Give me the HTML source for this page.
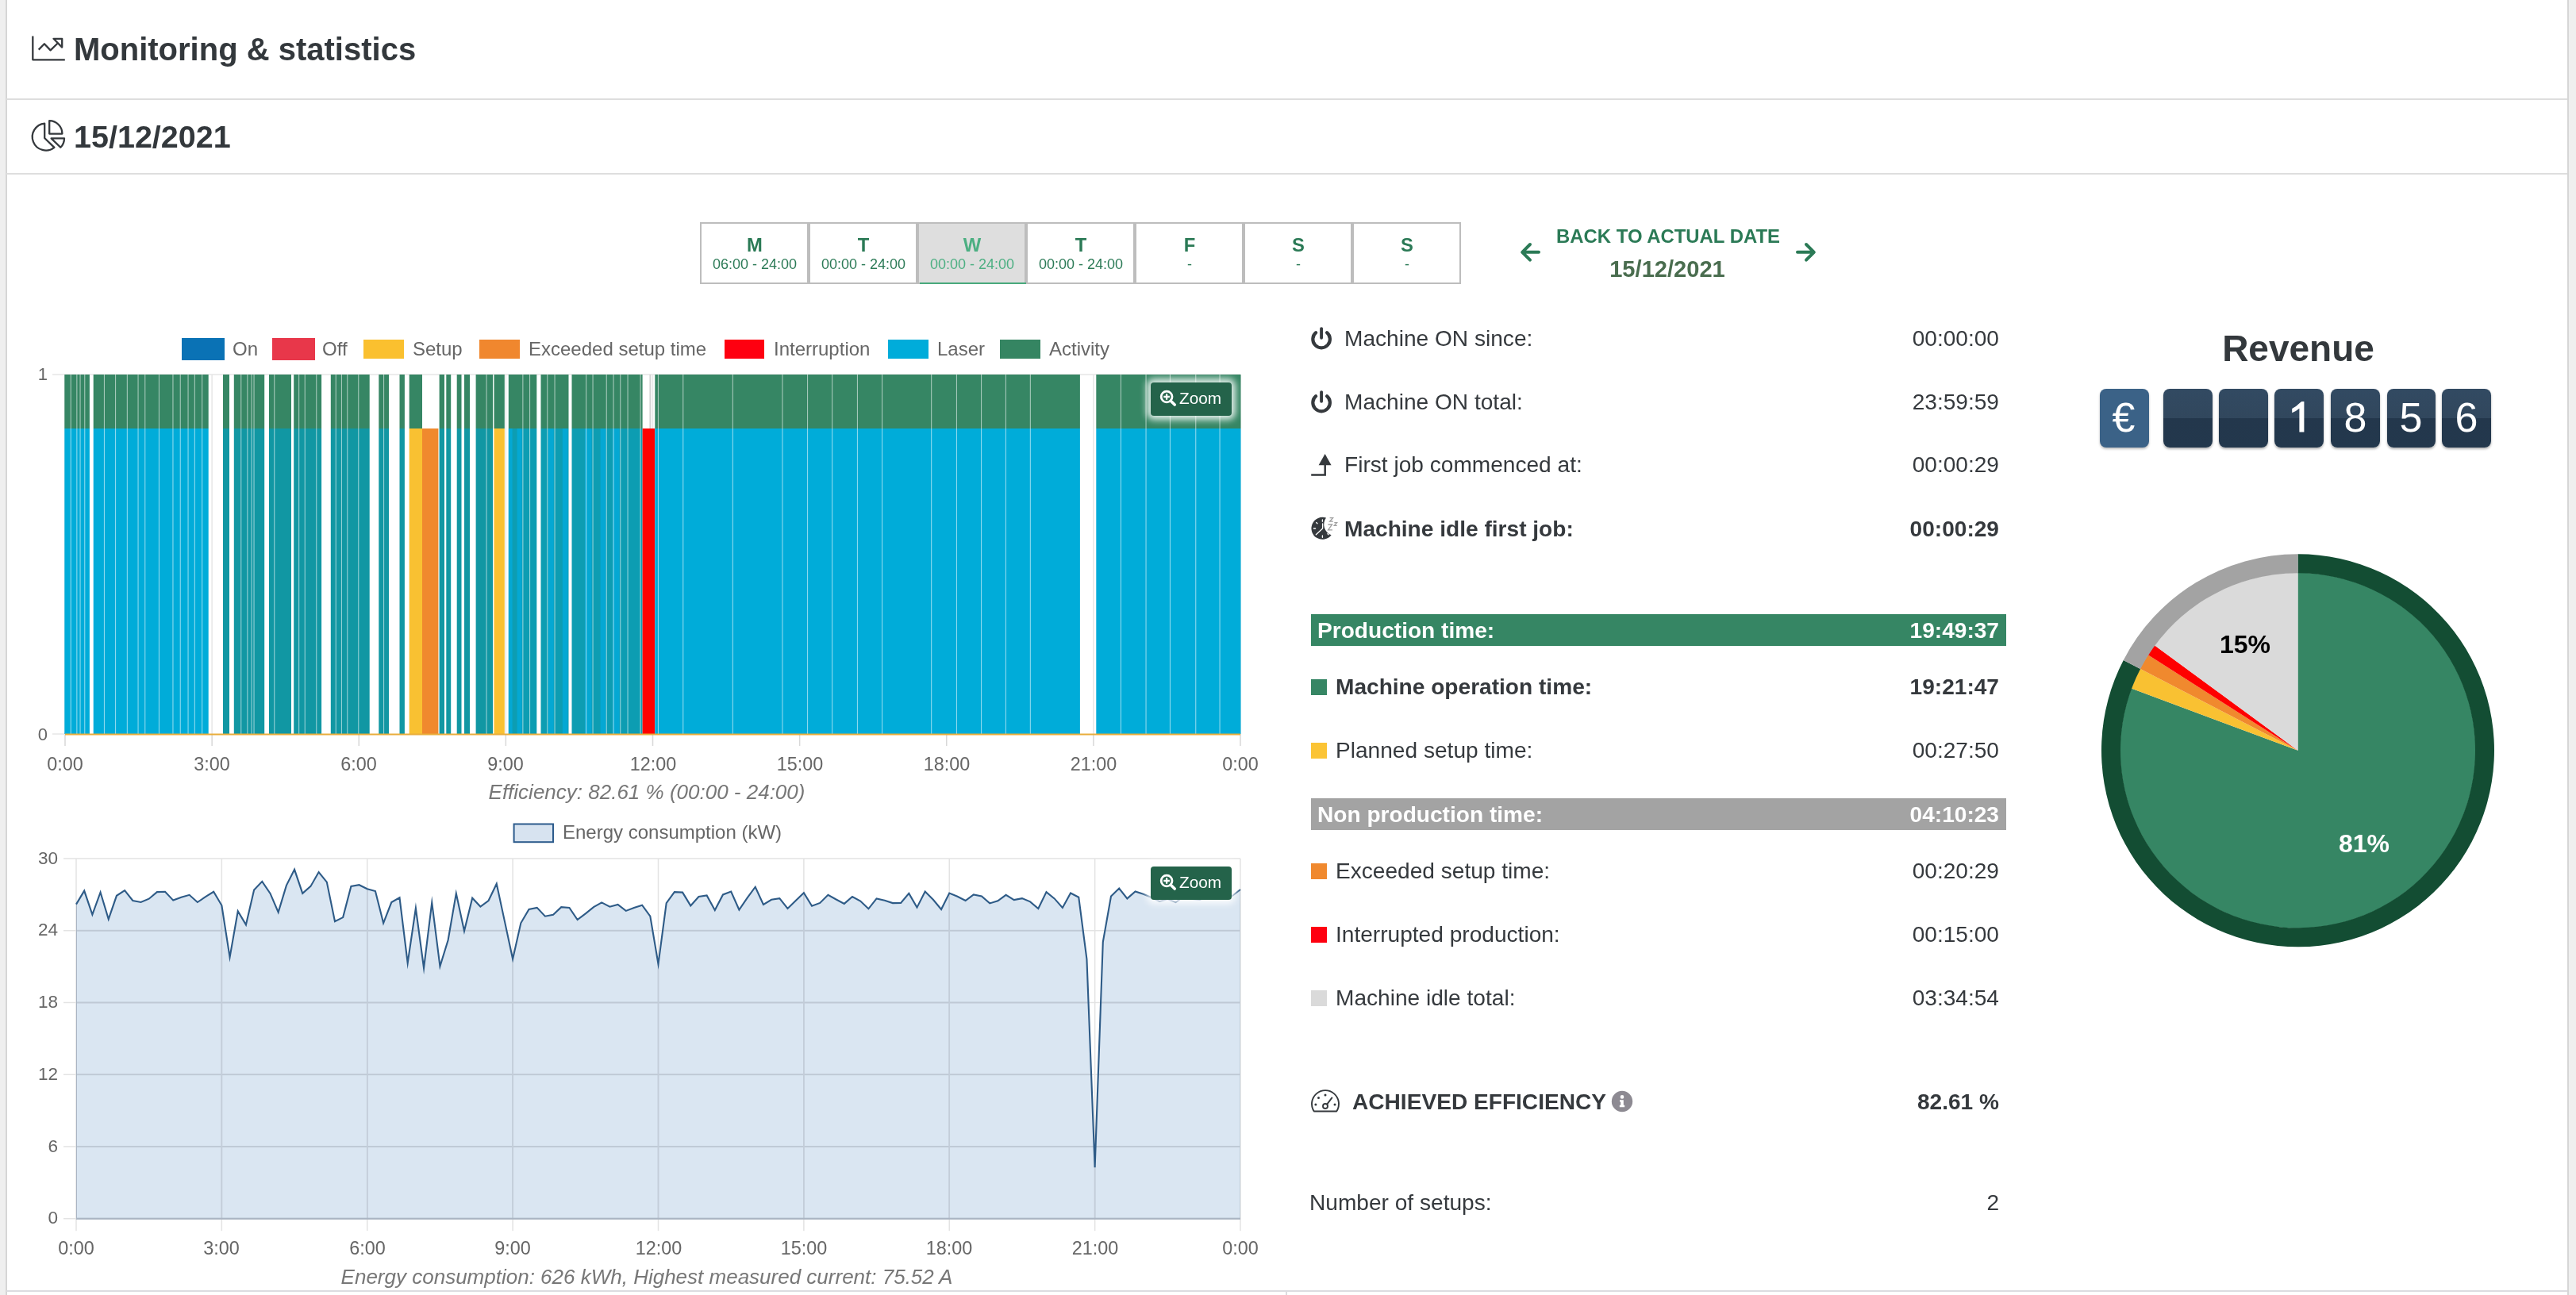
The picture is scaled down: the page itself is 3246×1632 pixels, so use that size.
<!DOCTYPE html>
<html><head><meta charset="utf-8"><title>Monitoring &amp; statistics</title>
<style>
html,body{margin:0;padding:0;}
body{width:3246px;height:1632px;position:relative;overflow:hidden;background:#efefef;font-family:"Liberation Sans", sans-serif;}
.t{position:absolute;white-space:nowrap;will-change:transform;font-family:"Liberation Sans", sans-serif;}
.r{position:absolute;box-sizing:border-box;}
.a{position:absolute;}
</style></head><body>
<div class="r" style="left:0.00px;top:0.00px;width:3246.00px;height:1632.00px;background:#efefef;"></div>
<div class="r" style="left:8.00px;top:0.00px;width:3227.00px;height:1632.00px;background:#ffffff;"></div>
<div class="r" style="left:6.50px;top:0.00px;width:2.00px;height:1632.00px;background:#d6d6d6;"></div>
<div class="r" style="left:3234.50px;top:0.00px;width:2.00px;height:1632.00px;background:#d6d6d6;"></div>
<div class="r" style="left:8.00px;top:124.00px;width:3227.00px;height:2.00px;background:#dedede;"></div>
<div class="r" style="left:8.00px;top:217.50px;width:3227.00px;height:2.00px;background:#dedede;"></div>
<div class="r" style="left:8.00px;top:1626.00px;width:3227.00px;height:2.00px;background:#dcdce0;"></div>
<div class="r" style="left:1619.50px;top:1627.00px;width:2.00px;height:5.00px;background:#dcdce0;"></div>
<svg class="a" style="left:0;top:0" width="120" height="230" viewBox="0 0 120 230">
<g fill="none" stroke="#35393d" stroke-width="2.3" stroke-linejoin="round" stroke-linecap="butt">
<path d="M41.3 45.5 V75.3 H81.8"/>
<path d="M48.7 62.6 L55.9 55.2 L63.6 63.4 L73.2 54"/>
<path d="M67.5 48.8 H78.2 V59.6 Z"/>
<path d="M56.2 155.6 A17 17 0 1 0 68.4 185.8 L56.2 174 Z"/>
<path d="M62.2 152.2 V168.6 H78.4 A16.3 16.3 0 0 0 62.2 152.2 Z"/>
<path d="M64.6 174.4 H81 A16.5 16.5 0 0 1 76.3 185.8 Z"/>
</g></svg>
<div class="t" style="left:92.50px;top:42.13px;font-size:40px;line-height:40px;font-weight:bold;color:#33383c;font-style:normal;">Monitoring &amp; statistics</div>
<div class="t" style="left:92.50px;top:152.76px;font-size:39.5px;line-height:39.5px;font-weight:bold;color:#33383c;font-style:normal;">15/12/2021</div>
<div class="r" style="left:882px;top:280px;width:137px;height:78px;border:2px solid #bdbdbd;background:#ffffff;"></div>
<div class="t" style="left:200.50px;width:1500px;text-align:center;top:297.05px;font-size:23.8px;line-height:23.8px;font-weight:bold;color:#2b7a56;font-style:normal;">M</div>
<div class="t" style="left:200.50px;width:1500px;text-align:center;top:323.76px;font-size:18px;line-height:18px;font-weight:normal;color:#2b7a56;font-style:normal;">06:00 - 24:00</div>
<div class="r" style="left:1019px;top:280px;width:137px;height:78px;border:2px solid #bdbdbd;background:#ffffff;"></div>
<div class="t" style="left:337.50px;width:1500px;text-align:center;top:297.05px;font-size:23.8px;line-height:23.8px;font-weight:bold;color:#2b7a56;font-style:normal;">T</div>
<div class="t" style="left:337.50px;width:1500px;text-align:center;top:323.76px;font-size:18px;line-height:18px;font-weight:normal;color:#2b7a56;font-style:normal;">00:00 - 24:00</div>
<div class="r" style="left:1156px;top:280px;width:137px;height:78px;border:2px solid #bdbdbd;background:#dedede;"></div>
<div class="r" style="left:1159.00px;top:356.00px;width:134.00px;height:2.00px;background:#48a97c;"></div>
<div class="t" style="left:474.50px;width:1500px;text-align:center;top:297.05px;font-size:23.8px;line-height:23.8px;font-weight:bold;color:#4caf82;font-style:normal;">W</div>
<div class="t" style="left:474.50px;width:1500px;text-align:center;top:323.76px;font-size:18px;line-height:18px;font-weight:normal;color:#4caf82;font-style:normal;">00:00 - 24:00</div>
<div class="r" style="left:1293px;top:280px;width:137px;height:78px;border:2px solid #bdbdbd;background:#ffffff;"></div>
<div class="t" style="left:611.50px;width:1500px;text-align:center;top:297.05px;font-size:23.8px;line-height:23.8px;font-weight:bold;color:#2b7a56;font-style:normal;">T</div>
<div class="t" style="left:611.50px;width:1500px;text-align:center;top:323.76px;font-size:18px;line-height:18px;font-weight:normal;color:#2b7a56;font-style:normal;">00:00 - 24:00</div>
<div class="r" style="left:1430px;top:280px;width:137px;height:78px;border:2px solid #bdbdbd;background:#ffffff;"></div>
<div class="t" style="left:748.50px;width:1500px;text-align:center;top:297.05px;font-size:23.8px;line-height:23.8px;font-weight:bold;color:#2b7a56;font-style:normal;">F</div>
<div class="t" style="left:748.50px;width:1500px;text-align:center;top:323.76px;font-size:18px;line-height:18px;font-weight:normal;color:#2b7a56;font-style:normal;">-</div>
<div class="r" style="left:1567px;top:280px;width:137px;height:78px;border:2px solid #bdbdbd;background:#ffffff;"></div>
<div class="t" style="left:885.50px;width:1500px;text-align:center;top:297.05px;font-size:23.8px;line-height:23.8px;font-weight:bold;color:#2b7a56;font-style:normal;">S</div>
<div class="t" style="left:885.50px;width:1500px;text-align:center;top:323.76px;font-size:18px;line-height:18px;font-weight:normal;color:#2b7a56;font-style:normal;">-</div>
<div class="r" style="left:1704px;top:280px;width:137px;height:78px;border:2px solid #bdbdbd;background:#ffffff;"></div>
<div class="t" style="left:1022.50px;width:1500px;text-align:center;top:297.05px;font-size:23.8px;line-height:23.8px;font-weight:bold;color:#2b7a56;font-style:normal;">S</div>
<div class="t" style="left:1022.50px;width:1500px;text-align:center;top:323.76px;font-size:18px;line-height:18px;font-weight:normal;color:#2b7a56;font-style:normal;">-</div>
<div class="t" style="left:1351.50px;width:1500px;text-align:center;top:285.56px;font-size:23.9px;line-height:23.9px;font-weight:bold;color:#2b7a56;font-style:normal;">BACK TO ACTUAL DATE</div>
<div class="t" style="left:1350.50px;width:1500px;text-align:center;top:324.76px;font-size:29.1px;line-height:29.1px;font-weight:bold;color:#4a6d4f;font-style:normal;">15/12/2021</div>
<svg class="a" style="left:1900px;top:295px" width="400" height="50" viewBox="1900 295 400 50">
<g fill="none" stroke="#2b7a56" stroke-width="4" stroke-linecap="round" stroke-linejoin="round">
<path d="M1939 317.8 H1918.5 M1928 308 L1918.2 317.8 L1928 327.6"/>
<path d="M2265 317.8 H2285.5 M2276 308 L2285.8 317.8 L2276 327.6"/>
</g></svg>
<svg class="a" style="left:0;top:400px" width="1600" height="600" viewBox="0 400 1600 600">
<rect x="81.25" y="472.0" width="1.5" height="453.0" fill="#e6e6e6"/>
<rect x="81.25" y="925.0" width="1.5" height="15" fill="#d8d8d8"/>
<rect x="266.38" y="472.0" width="1.5" height="453.0" fill="#e6e6e6"/>
<rect x="266.38" y="925.0" width="1.5" height="15" fill="#d8d8d8"/>
<rect x="451.50" y="472.0" width="1.5" height="453.0" fill="#e6e6e6"/>
<rect x="451.50" y="925.0" width="1.5" height="15" fill="#d8d8d8"/>
<rect x="636.62" y="472.0" width="1.5" height="453.0" fill="#e6e6e6"/>
<rect x="636.62" y="925.0" width="1.5" height="15" fill="#d8d8d8"/>
<rect x="821.75" y="472.0" width="1.5" height="453.0" fill="#e6e6e6"/>
<rect x="821.75" y="925.0" width="1.5" height="15" fill="#d8d8d8"/>
<rect x="1006.88" y="472.0" width="1.5" height="453.0" fill="#e6e6e6"/>
<rect x="1006.88" y="925.0" width="1.5" height="15" fill="#d8d8d8"/>
<rect x="1192.00" y="472.0" width="1.5" height="453.0" fill="#e6e6e6"/>
<rect x="1192.00" y="925.0" width="1.5" height="15" fill="#d8d8d8"/>
<rect x="1377.12" y="472.0" width="1.5" height="453.0" fill="#e6e6e6"/>
<rect x="1377.12" y="925.0" width="1.5" height="15" fill="#d8d8d8"/>
<rect x="1562.25" y="472.0" width="1.5" height="453.0" fill="#e6e6e6"/>
<rect x="1562.25" y="925.0" width="1.5" height="15" fill="#d8d8d8"/>
<rect x="66" y="471.25" width="1497.0" height="1.5" fill="#e6e6e6"/>
<rect x="66" y="924.25" width="16.0" height="1.5" fill="#e6e6e6"/>
<rect x="81.3" y="472.0" width="31.60" height="68.0" fill="#368664"/>
<rect x="81.3" y="540.0" width="31.60" height="385.0" fill="#00acd9"/>
<rect x="117.7" y="472.0" width="145.00" height="68.0" fill="#368664"/>
<rect x="117.7" y="540.0" width="145.00" height="385.0" fill="#00acd9"/>
<rect x="281" y="472.0" width="8.00" height="68.0" fill="#368664"/>
<rect x="281" y="540.0" width="8.00" height="385.0" fill="#1197a3"/>
<rect x="294.8" y="472.0" width="38.40" height="68.0" fill="#368664"/>
<rect x="294.8" y="540.0" width="38.40" height="385.0" fill="#1197a3"/>
<rect x="339" y="472.0" width="28.00" height="68.0" fill="#368664"/>
<rect x="339" y="540.0" width="28.00" height="385.0" fill="#1197a3"/>
<rect x="370.2" y="472.0" width="34.90" height="68.0" fill="#368664"/>
<rect x="370.2" y="540.0" width="34.90" height="385.0" fill="#1197a3"/>
<rect x="416.8" y="472.0" width="48.90" height="68.0" fill="#368664"/>
<rect x="416.8" y="540.0" width="48.90" height="385.0" fill="#1197a3"/>
<rect x="477.3" y="472.0" width="12.80" height="68.0" fill="#368664"/>
<rect x="477.3" y="540.0" width="12.80" height="385.0" fill="#1197a3"/>
<rect x="503.5" y="472.0" width="6.40" height="68.0" fill="#368664"/>
<rect x="503.5" y="540.0" width="6.40" height="385.0" fill="#1197a3"/>
<rect x="515.7" y="472.0" width="16.30" height="68.0" fill="#368664"/>
<rect x="515.7" y="540.0" width="16.30" height="385.0" fill="#f9c132"/>
<rect x="532" y="540.0" width="20.40" height="385.0" fill="#f0892e"/>
<rect x="553.6" y="472.0" width="6.40" height="68.0" fill="#368664"/>
<rect x="553.6" y="540.0" width="6.40" height="385.0" fill="#1197a3"/>
<rect x="562.3" y="472.0" width="5.90" height="68.0" fill="#368664"/>
<rect x="562.3" y="540.0" width="5.90" height="385.0" fill="#1197a3"/>
<rect x="575.7" y="472.0" width="5.80" height="68.0" fill="#368664"/>
<rect x="575.7" y="540.0" width="5.80" height="385.0" fill="#1197a3"/>
<rect x="585" y="472.0" width="7.00" height="68.0" fill="#368664"/>
<rect x="585" y="540.0" width="7.00" height="385.0" fill="#1197a3"/>
<rect x="599.6" y="472.0" width="21.50" height="68.0" fill="#368664"/>
<rect x="599.6" y="540.0" width="21.50" height="385.0" fill="#1197a3"/>
<rect x="622.5" y="472.0" width="13.30" height="68.0" fill="#368664"/>
<rect x="622.5" y="540.0" width="13.30" height="385.0" fill="#f9c132"/>
<rect x="640.8" y="472.0" width="35.50" height="68.0" fill="#368664"/>
<rect x="640.8" y="540.0" width="35.50" height="385.0" fill="#0d9db2"/>
<rect x="681.5" y="472.0" width="35.00" height="68.0" fill="#368664"/>
<rect x="681.5" y="540.0" width="35.00" height="385.0" fill="#0d9db2"/>
<rect x="720.5" y="472.0" width="89.10" height="68.0" fill="#368664"/>
<rect x="720.5" y="540.0" width="89.10" height="385.0" fill="#0d9db2"/>
<rect x="809.6" y="540.0" width="15.70" height="385.0" fill="#fe0000"/>
<rect x="825.3" y="472.0" width="535.60" height="68.0" fill="#368664"/>
<rect x="825.3" y="540.0" width="535.60" height="385.0" fill="#00acd9"/>
<rect x="1381.3" y="472.0" width="182.20" height="68.0" fill="#368664"/>
<rect x="1381.3" y="540.0" width="182.20" height="385.0" fill="#00acd9"/>
<rect x="640.9" y="540.0" width="4.70" height="385.0" fill="#04a8d3"/>
<rect x="651.6" y="540.0" width="6.00" height="385.0" fill="#04a8d3"/>
<rect x="690.9" y="540.0" width="6.80" height="385.0" fill="#04a8d3"/>
<rect x="708.8" y="540.0" width="6.80" height="385.0" fill="#04a8d3"/>
<rect x="737" y="540.0" width="8.50" height="385.0" fill="#04a8d3"/>
<rect x="756.6" y="540.0" width="6.90" height="385.0" fill="#04a8d3"/>
<rect x="772" y="540.0" width="8.50" height="385.0" fill="#04a8d3"/>
<rect x="88.70" y="472.0" width="1.1" height="453.0" fill="#ffffff" fill-opacity="0.55"/>
<rect x="96.30" y="472.0" width="1.1" height="453.0" fill="#ffffff" fill-opacity="0.55"/>
<rect x="100.50" y="472.0" width="1.1" height="453.0" fill="#ffffff" fill-opacity="0.55"/>
<rect x="106.20" y="472.0" width="1.1" height="453.0" fill="#ffffff" fill-opacity="0.55"/>
<rect x="130.90" y="472.0" width="1.1" height="453.0" fill="#ffffff" fill-opacity="0.55"/>
<rect x="145.00" y="472.0" width="1.1" height="453.0" fill="#ffffff" fill-opacity="0.55"/>
<rect x="159.80" y="472.0" width="1.1" height="453.0" fill="#ffffff" fill-opacity="0.55"/>
<rect x="173.50" y="472.0" width="1.1" height="453.0" fill="#ffffff" fill-opacity="0.55"/>
<rect x="182.20" y="472.0" width="1.1" height="453.0" fill="#ffffff" fill-opacity="0.55"/>
<rect x="199.90" y="472.0" width="1.1" height="453.0" fill="#ffffff" fill-opacity="0.55"/>
<rect x="217.40" y="472.0" width="1.1" height="453.0" fill="#ffffff" fill-opacity="0.55"/>
<rect x="226.70" y="472.0" width="1.1" height="453.0" fill="#ffffff" fill-opacity="0.55"/>
<rect x="236.50" y="472.0" width="1.1" height="453.0" fill="#ffffff" fill-opacity="0.55"/>
<rect x="244.80" y="472.0" width="1.1" height="453.0" fill="#ffffff" fill-opacity="0.55"/>
<rect x="254.10" y="472.0" width="1.1" height="453.0" fill="#ffffff" fill-opacity="0.55"/>
<rect x="303.20" y="472.0" width="1.1" height="453.0" fill="#ffffff" fill-opacity="0.55"/>
<rect x="311.30" y="472.0" width="1.1" height="453.0" fill="#ffffff" fill-opacity="0.55"/>
<rect x="316.50" y="472.0" width="1.1" height="453.0" fill="#ffffff" fill-opacity="0.55"/>
<rect x="319.50" y="472.0" width="1.1" height="453.0" fill="#ffffff" fill-opacity="0.55"/>
<rect x="345.20" y="472.0" width="1.1" height="453.0" fill="#ffffff" fill-opacity="0.55"/>
<rect x="376.10" y="472.0" width="1.1" height="453.0" fill="#ffffff" fill-opacity="0.55"/>
<rect x="383.70" y="472.0" width="1.1" height="453.0" fill="#ffffff" fill-opacity="0.55"/>
<rect x="398.20" y="472.0" width="1.1" height="453.0" fill="#ffffff" fill-opacity="0.55"/>
<rect x="422.70" y="472.0" width="1.1" height="453.0" fill="#ffffff" fill-opacity="0.55"/>
<rect x="429.90" y="472.0" width="1.1" height="453.0" fill="#ffffff" fill-opacity="0.55"/>
<rect x="437.20" y="472.0" width="1.1" height="453.0" fill="#ffffff" fill-opacity="0.55"/>
<rect x="451.20" y="472.0" width="1.1" height="453.0" fill="#ffffff" fill-opacity="0.55"/>
<rect x="483.00" y="472.0" width="1.1" height="453.0" fill="#ffffff" fill-opacity="0.55"/>
<rect x="612.50" y="472.0" width="1.1" height="453.0" fill="#ffffff" fill-opacity="0.55"/>
<rect x="658.30" y="472.0" width="1.1" height="453.0" fill="#ffffff" fill-opacity="0.55"/>
<rect x="667.00" y="472.0" width="1.1" height="453.0" fill="#ffffff" fill-opacity="0.55"/>
<rect x="689.20" y="472.0" width="1.1" height="453.0" fill="#ffffff" fill-opacity="0.55"/>
<rect x="698.50" y="472.0" width="1.1" height="453.0" fill="#ffffff" fill-opacity="0.55"/>
<rect x="738.10" y="472.0" width="1.1" height="453.0" fill="#ffffff" fill-opacity="0.55"/>
<rect x="746.50" y="472.0" width="1.1" height="453.0" fill="#ffffff" fill-opacity="0.55"/>
<rect x="763.70" y="472.0" width="1.1" height="453.0" fill="#ffffff" fill-opacity="0.55"/>
<rect x="772.50" y="472.0" width="1.1" height="453.0" fill="#ffffff" fill-opacity="0.55"/>
<rect x="781.20" y="472.0" width="1.1" height="453.0" fill="#ffffff" fill-opacity="0.55"/>
<rect x="790.50" y="472.0" width="1.1" height="453.0" fill="#ffffff" fill-opacity="0.55"/>
<rect x="806.50" y="472.0" width="1.1" height="453.0" fill="#ffffff" fill-opacity="0.55"/>
<rect x="828.90" y="472.0" width="1.1" height="453.0" fill="#ffffff" fill-opacity="0.55"/>
<rect x="860.20" y="472.0" width="1.1" height="453.0" fill="#ffffff" fill-opacity="0.55"/>
<rect x="922.80" y="472.0" width="1.1" height="453.0" fill="#ffffff" fill-opacity="0.55"/>
<rect x="985.40" y="472.0" width="1.1" height="453.0" fill="#ffffff" fill-opacity="0.55"/>
<rect x="1017.00" y="472.0" width="1.1" height="453.0" fill="#ffffff" fill-opacity="0.55"/>
<rect x="1048.10" y="472.0" width="1.1" height="453.0" fill="#ffffff" fill-opacity="0.55"/>
<rect x="1079.90" y="472.0" width="1.1" height="453.0" fill="#ffffff" fill-opacity="0.55"/>
<rect x="1111.00" y="472.0" width="1.1" height="453.0" fill="#ffffff" fill-opacity="0.55"/>
<rect x="1173.10" y="472.0" width="1.1" height="453.0" fill="#ffffff" fill-opacity="0.55"/>
<rect x="1204.90" y="472.0" width="1.1" height="453.0" fill="#ffffff" fill-opacity="0.55"/>
<rect x="1236.00" y="472.0" width="1.1" height="453.0" fill="#ffffff" fill-opacity="0.55"/>
<rect x="1266.90" y="472.0" width="1.1" height="453.0" fill="#ffffff" fill-opacity="0.55"/>
<rect x="1297.80" y="472.0" width="1.1" height="453.0" fill="#ffffff" fill-opacity="0.55"/>
<rect x="1411.90" y="472.0" width="1.1" height="453.0" fill="#ffffff" fill-opacity="0.55"/>
<rect x="1443.50" y="472.0" width="1.1" height="453.0" fill="#ffffff" fill-opacity="0.55"/>
<rect x="1473.90" y="472.0" width="1.1" height="453.0" fill="#ffffff" fill-opacity="0.55"/>
<rect x="1506.20" y="472.0" width="1.1" height="453.0" fill="#ffffff" fill-opacity="0.55"/>
<rect x="1536.50" y="472.0" width="1.1" height="453.0" fill="#ffffff" fill-opacity="0.55"/>
<rect x="818.4" y="472.0" width="2" height="68.0" fill="#d4d4d4"/>
<rect x="82.0" y="924.5" width="1481.0" height="2" fill="#e9ae3c"/>
</svg>
<div class="t" style="left:-1440.00px;width:1500px;text-align:right;top:461.07px;font-size:22px;line-height:22px;font-weight:normal;color:#666;font-style:normal;">1</div>
<div class="t" style="left:-1440.00px;width:1500px;text-align:right;top:915.37px;font-size:22px;line-height:22px;font-weight:normal;color:#666;font-style:normal;">0</div>
<div class="t" style="left:-668.00px;width:1500px;text-align:center;top:952.19px;font-size:23.4px;line-height:23.4px;font-weight:normal;color:#666;font-style:normal;">0:00</div>
<div class="t" style="left:-482.88px;width:1500px;text-align:center;top:952.19px;font-size:23.4px;line-height:23.4px;font-weight:normal;color:#666;font-style:normal;">3:00</div>
<div class="t" style="left:-297.75px;width:1500px;text-align:center;top:952.19px;font-size:23.4px;line-height:23.4px;font-weight:normal;color:#666;font-style:normal;">6:00</div>
<div class="t" style="left:-112.62px;width:1500px;text-align:center;top:952.19px;font-size:23.4px;line-height:23.4px;font-weight:normal;color:#666;font-style:normal;">9:00</div>
<div class="t" style="left:72.50px;width:1500px;text-align:center;top:952.19px;font-size:23.4px;line-height:23.4px;font-weight:normal;color:#666;font-style:normal;">12:00</div>
<div class="t" style="left:257.62px;width:1500px;text-align:center;top:952.19px;font-size:23.4px;line-height:23.4px;font-weight:normal;color:#666;font-style:normal;">15:00</div>
<div class="t" style="left:442.75px;width:1500px;text-align:center;top:952.19px;font-size:23.4px;line-height:23.4px;font-weight:normal;color:#666;font-style:normal;">18:00</div>
<div class="t" style="left:627.88px;width:1500px;text-align:center;top:952.19px;font-size:23.4px;line-height:23.4px;font-weight:normal;color:#666;font-style:normal;">21:00</div>
<div class="t" style="left:813.00px;width:1500px;text-align:center;top:952.19px;font-size:23.4px;line-height:23.4px;font-weight:normal;color:#666;font-style:normal;">0:00</div>
<div class="t" style="left:65.00px;width:1500px;text-align:center;top:984.99px;font-size:26px;line-height:26px;font-weight:normal;color:#777;font-style:italic;">Efficiency: 82.61 % (00:00 - 24:00)</div>
<div class="r" style="left:229.00px;top:426.00px;width:54.00px;height:28.00px;background:#0a72b5;"></div>
<div class="t" style="left:292.50px;top:427.68px;font-size:24px;line-height:24px;font-weight:normal;color:#666;font-style:normal;">On</div>
<div class="r" style="left:343.00px;top:426.00px;width:54.00px;height:28.00px;background:#e8374a;"></div>
<div class="t" style="left:406.00px;top:427.68px;font-size:24px;line-height:24px;font-weight:normal;color:#666;font-style:normal;">Off</div>
<div class="r" style="left:458.00px;top:428.20px;width:51.00px;height:23.50px;background:#fac02f;"></div>
<div class="t" style="left:520.00px;top:427.68px;font-size:24px;line-height:24px;font-weight:normal;color:#666;font-style:normal;">Setup</div>
<div class="r" style="left:604.00px;top:428.20px;width:51.00px;height:23.50px;background:#f0872e;"></div>
<div class="t" style="left:665.90px;top:427.68px;font-size:24px;line-height:24px;font-weight:normal;color:#666;font-style:normal;">Exceeded setup time</div>
<div class="r" style="left:913.00px;top:428.20px;width:50.00px;height:23.50px;background:#fe0010;"></div>
<div class="t" style="left:975.00px;top:427.68px;font-size:24px;line-height:24px;font-weight:normal;color:#666;font-style:normal;">Interruption</div>
<div class="r" style="left:1119.00px;top:428.20px;width:51.00px;height:23.50px;background:#00acda;"></div>
<div class="t" style="left:1180.50px;top:427.68px;font-size:24px;line-height:24px;font-weight:normal;color:#666;font-style:normal;">Laser</div>
<div class="r" style="left:1260.00px;top:428.20px;width:51.00px;height:23.50px;background:#358562;"></div>
<div class="t" style="left:1322.10px;top:427.68px;font-size:24px;line-height:24px;font-weight:normal;color:#666;font-style:normal;">Activity</div>
<div class="r" style="left:1450px;top:482px;width:102px;height:42px;background:#24634a;border-radius:4px;box-shadow:0 0 8px 5px rgba(255,255,255,0.85);"></div>
<svg class="a" style="left:1450px;top:482px" width="102" height="42" viewBox="0 0 102 42">
<g stroke="#fff" fill="none"><circle cx="20.1" cy="18" r="6.9" stroke-width="2.8"/>
<path d="M20.1 14.2 V21.8 M16.3 18 H23.9" stroke-width="2.3"/>
<path d="M25.3 23.2 L30.2 28.1" stroke-width="3.6" stroke-linecap="round"/></g></svg>
<div class="t" style="left:1485.80px;top:492.19px;font-size:20.8px;line-height:20.8px;font-weight:normal;color:#ffffff;font-style:normal;">Zoom</div>
<svg class="a" style="left:0;top:1030px" width="1600" height="580" viewBox="0 1030 1600 580">
<rect x="647.6" y="1038.5" width="49.4" height="22.7" fill="#d7e3f0" stroke="#2c5b8c" stroke-width="2"/>
<rect x="80" y="1534.95" width="1483.0" height="1.5" fill="#e3e3e3"/>
<rect x="80" y="1444.21" width="1483.0" height="1.5" fill="#e3e3e3"/>
<rect x="80" y="1353.47" width="1483.0" height="1.5" fill="#e3e3e3"/>
<rect x="80" y="1262.73" width="1483.0" height="1.5" fill="#e3e3e3"/>
<rect x="80" y="1171.99" width="1483.0" height="1.5" fill="#e3e3e3"/>
<rect x="80" y="1081.25" width="1483.0" height="1.5" fill="#e3e3e3"/>
<rect x="95.25" y="1082.0" width="1.5" height="469.20000000000005" fill="#e3e3e3"/>
<rect x="278.62" y="1082.0" width="1.5" height="469.20000000000005" fill="#e3e3e3"/>
<rect x="462.00" y="1082.0" width="1.5" height="469.20000000000005" fill="#e3e3e3"/>
<rect x="645.38" y="1082.0" width="1.5" height="469.20000000000005" fill="#e3e3e3"/>
<rect x="828.75" y="1082.0" width="1.5" height="469.20000000000005" fill="#e3e3e3"/>
<rect x="1012.12" y="1082.0" width="1.5" height="469.20000000000005" fill="#e3e3e3"/>
<rect x="1195.50" y="1082.0" width="1.5" height="469.20000000000005" fill="#e3e3e3"/>
<rect x="1378.88" y="1082.0" width="1.5" height="469.20000000000005" fill="#e3e3e3"/>
<rect x="1562.25" y="1082.0" width="1.5" height="469.20000000000005" fill="#e3e3e3"/>
<polygon points="96.0,1535.7 96.00,1139.60 106.19,1122.60 116.38,1152.50 126.56,1124.50 136.75,1158.30 146.94,1128.80 157.12,1122.10 167.31,1135.00 177.50,1137.00 187.69,1132.70 197.88,1124.10 208.06,1123.80 218.25,1134.60 228.44,1130.70 238.62,1127.80 248.81,1137.00 259.00,1130.20 269.19,1123.80 279.38,1141.00 289.56,1206.40 299.75,1148.20 309.94,1165.40 320.12,1121.60 330.31,1110.90 340.50,1125.90 350.69,1149.60 360.88,1115.90 371.06,1095.80 381.25,1125.90 391.44,1116.90 401.62,1099.10 411.81,1111.60 422.00,1161.10 432.19,1156.10 442.38,1116.90 452.56,1115.20 462.75,1120.20 472.94,1123.10 483.12,1163.30 493.31,1137.00 503.50,1131.30 513.69,1213.60 523.88,1144.60 534.06,1220.00 544.25,1137.40 554.44,1217.90 564.62,1184.80 574.81,1125.90 585.00,1173.30 595.19,1131.70 605.38,1142.50 615.56,1135.00 625.75,1113.70 635.94,1161.10 646.12,1208.50 656.31,1163.30 666.50,1146.00 676.69,1143.90 686.88,1154.70 697.06,1152.80 707.25,1143.20 717.44,1143.90 727.62,1159.00 737.81,1151.40 748.00,1143.20 758.19,1137.40 768.38,1142.70 778.56,1139.90 788.75,1147.90 798.94,1143.90 809.12,1140.70 819.31,1154.70 829.50,1215.00 839.69,1138.10 849.88,1124.10 860.06,1124.60 870.25,1141.40 880.44,1130.00 890.62,1128.50 900.81,1147.00 911.00,1127.40 921.19,1123.50 931.38,1146.50 941.56,1131.70 951.75,1117.70 961.94,1139.90 972.12,1133.80 982.31,1132.10 992.50,1145.00 1002.69,1135.00 1012.88,1125.20 1023.06,1141.70 1033.25,1137.90 1043.44,1127.80 1053.62,1133.50 1063.81,1138.90 1074.00,1130.00 1084.19,1135.60 1094.38,1145.30 1104.56,1132.40 1114.75,1134.80 1124.94,1138.10 1135.12,1137.90 1145.31,1125.90 1155.50,1143.60 1165.69,1123.50 1175.88,1133.80 1186.06,1146.00 1196.25,1125.50 1206.44,1129.80 1216.62,1135.00 1226.81,1127.40 1237.00,1129.50 1247.19,1138.40 1257.38,1135.30 1267.56,1127.80 1277.75,1134.10 1287.94,1132.10 1298.12,1136.40 1308.31,1145.00 1318.50,1124.10 1328.69,1132.40 1338.88,1143.90 1349.06,1125.50 1359.25,1130.70 1369.44,1208.90 1379.62,1471.10 1389.81,1187.00 1400.00,1129.50 1410.19,1119.50 1420.38,1132.40 1430.56,1123.50 1440.75,1126.70 1450.94,1131.00 1461.12,1136.00 1471.31,1133.00 1481.50,1137.00 1491.69,1130.00 1501.88,1133.00 1512.06,1134.00 1522.25,1129.00 1532.44,1133.00 1542.62,1127.00 1552.81,1129.00 1563.00,1121.00 1563.0,1535.7" fill="rgb(70,130,190)" fill-opacity="0.2"/>
<clipPath id="fillclip"><polygon points="96.0,1536.9 96.00,1139.60 106.19,1122.60 116.38,1152.50 126.56,1124.50 136.75,1158.30 146.94,1128.80 157.12,1122.10 167.31,1135.00 177.50,1137.00 187.69,1132.70 197.88,1124.10 208.06,1123.80 218.25,1134.60 228.44,1130.70 238.62,1127.80 248.81,1137.00 259.00,1130.20 269.19,1123.80 279.38,1141.00 289.56,1206.40 299.75,1148.20 309.94,1165.40 320.12,1121.60 330.31,1110.90 340.50,1125.90 350.69,1149.60 360.88,1115.90 371.06,1095.80 381.25,1125.90 391.44,1116.90 401.62,1099.10 411.81,1111.60 422.00,1161.10 432.19,1156.10 442.38,1116.90 452.56,1115.20 462.75,1120.20 472.94,1123.10 483.12,1163.30 493.31,1137.00 503.50,1131.30 513.69,1213.60 523.88,1144.60 534.06,1220.00 544.25,1137.40 554.44,1217.90 564.62,1184.80 574.81,1125.90 585.00,1173.30 595.19,1131.70 605.38,1142.50 615.56,1135.00 625.75,1113.70 635.94,1161.10 646.12,1208.50 656.31,1163.30 666.50,1146.00 676.69,1143.90 686.88,1154.70 697.06,1152.80 707.25,1143.20 717.44,1143.90 727.62,1159.00 737.81,1151.40 748.00,1143.20 758.19,1137.40 768.38,1142.70 778.56,1139.90 788.75,1147.90 798.94,1143.90 809.12,1140.70 819.31,1154.70 829.50,1215.00 839.69,1138.10 849.88,1124.10 860.06,1124.60 870.25,1141.40 880.44,1130.00 890.62,1128.50 900.81,1147.00 911.00,1127.40 921.19,1123.50 931.38,1146.50 941.56,1131.70 951.75,1117.70 961.94,1139.90 972.12,1133.80 982.31,1132.10 992.50,1145.00 1002.69,1135.00 1012.88,1125.20 1023.06,1141.70 1033.25,1137.90 1043.44,1127.80 1053.62,1133.50 1063.81,1138.90 1074.00,1130.00 1084.19,1135.60 1094.38,1145.30 1104.56,1132.40 1114.75,1134.80 1124.94,1138.10 1135.12,1137.90 1145.31,1125.90 1155.50,1143.60 1165.69,1123.50 1175.88,1133.80 1186.06,1146.00 1196.25,1125.50 1206.44,1129.80 1216.62,1135.00 1226.81,1127.40 1237.00,1129.50 1247.19,1138.40 1257.38,1135.30 1267.56,1127.80 1277.75,1134.10 1287.94,1132.10 1298.12,1136.40 1308.31,1145.00 1318.50,1124.10 1328.69,1132.40 1338.88,1143.90 1349.06,1125.50 1359.25,1130.70 1369.44,1208.90 1379.62,1471.10 1389.81,1187.00 1400.00,1129.50 1410.19,1119.50 1420.38,1132.40 1430.56,1123.50 1440.75,1126.70 1450.94,1131.00 1461.12,1136.00 1471.31,1133.00 1481.50,1137.00 1491.69,1130.00 1501.88,1133.00 1512.06,1134.00 1522.25,1129.00 1532.44,1133.00 1542.62,1127.00 1552.81,1129.00 1563.00,1121.00 1563.0,1536.9"/></clipPath>
<g clip-path="url(#fillclip)">
<rect x="96.0" y="1444.06" width="1467.0" height="1.8" fill="#bfc9d5"/>
<rect x="96.0" y="1353.32" width="1467.0" height="1.8" fill="#bfc9d5"/>
<rect x="96.0" y="1262.58" width="1467.0" height="1.8" fill="#bfc9d5"/>
<rect x="96.0" y="1171.84" width="1467.0" height="1.8" fill="#bfc9d5"/>
<rect x="96.0" y="1081.10" width="1467.0" height="1.8" fill="#bfc9d5"/>
<rect x="278.57" y="1082.0" width="1.6" height="453.70000000000005" fill="#c3cdd9"/>
<rect x="461.95" y="1082.0" width="1.6" height="453.70000000000005" fill="#c3cdd9"/>
<rect x="645.33" y="1082.0" width="1.6" height="453.70000000000005" fill="#c3cdd9"/>
<rect x="828.70" y="1082.0" width="1.6" height="453.70000000000005" fill="#c3cdd9"/>
<rect x="1012.08" y="1082.0" width="1.6" height="453.70000000000005" fill="#c3cdd9"/>
<rect x="1195.45" y="1082.0" width="1.6" height="453.70000000000005" fill="#c3cdd9"/>
<rect x="1378.83" y="1082.0" width="1.6" height="453.70000000000005" fill="#c3cdd9"/>
<rect x="1562.20" y="1082.0" width="1.6" height="453.70000000000005" fill="#c3cdd9"/>
<rect x="95.0" y="1082.0" width="2" height="454.90000000000003" fill="#aab5c3"/>
<rect x="96.0" y="1534.7" width="1467.0" height="2.2" fill="#aab5c3"/>
</g>
<polyline points="96.00,1139.60 106.19,1122.60 116.38,1152.50 126.56,1124.50 136.75,1158.30 146.94,1128.80 157.12,1122.10 167.31,1135.00 177.50,1137.00 187.69,1132.70 197.88,1124.10 208.06,1123.80 218.25,1134.60 228.44,1130.70 238.62,1127.80 248.81,1137.00 259.00,1130.20 269.19,1123.80 279.38,1141.00 289.56,1206.40 299.75,1148.20 309.94,1165.40 320.12,1121.60 330.31,1110.90 340.50,1125.90 350.69,1149.60 360.88,1115.90 371.06,1095.80 381.25,1125.90 391.44,1116.90 401.62,1099.10 411.81,1111.60 422.00,1161.10 432.19,1156.10 442.38,1116.90 452.56,1115.20 462.75,1120.20 472.94,1123.10 483.12,1163.30 493.31,1137.00 503.50,1131.30 513.69,1213.60 523.88,1144.60 534.06,1220.00 544.25,1137.40 554.44,1217.90 564.62,1184.80 574.81,1125.90 585.00,1173.30 595.19,1131.70 605.38,1142.50 615.56,1135.00 625.75,1113.70 635.94,1161.10 646.12,1208.50 656.31,1163.30 666.50,1146.00 676.69,1143.90 686.88,1154.70 697.06,1152.80 707.25,1143.20 717.44,1143.90 727.62,1159.00 737.81,1151.40 748.00,1143.20 758.19,1137.40 768.38,1142.70 778.56,1139.90 788.75,1147.90 798.94,1143.90 809.12,1140.70 819.31,1154.70 829.50,1215.00 839.69,1138.10 849.88,1124.10 860.06,1124.60 870.25,1141.40 880.44,1130.00 890.62,1128.50 900.81,1147.00 911.00,1127.40 921.19,1123.50 931.38,1146.50 941.56,1131.70 951.75,1117.70 961.94,1139.90 972.12,1133.80 982.31,1132.10 992.50,1145.00 1002.69,1135.00 1012.88,1125.20 1023.06,1141.70 1033.25,1137.90 1043.44,1127.80 1053.62,1133.50 1063.81,1138.90 1074.00,1130.00 1084.19,1135.60 1094.38,1145.30 1104.56,1132.40 1114.75,1134.80 1124.94,1138.10 1135.12,1137.90 1145.31,1125.90 1155.50,1143.60 1165.69,1123.50 1175.88,1133.80 1186.06,1146.00 1196.25,1125.50 1206.44,1129.80 1216.62,1135.00 1226.81,1127.40 1237.00,1129.50 1247.19,1138.40 1257.38,1135.30 1267.56,1127.80 1277.75,1134.10 1287.94,1132.10 1298.12,1136.40 1308.31,1145.00 1318.50,1124.10 1328.69,1132.40 1338.88,1143.90 1349.06,1125.50 1359.25,1130.70 1369.44,1208.90 1379.62,1471.10 1389.81,1187.00 1400.00,1129.50 1410.19,1119.50 1420.38,1132.40 1430.56,1123.50 1440.75,1126.70 1450.94,1131.00 1461.12,1136.00 1471.31,1133.00 1481.50,1137.00 1491.69,1130.00 1501.88,1133.00 1512.06,1134.00 1522.25,1129.00 1532.44,1133.00 1542.62,1127.00 1552.81,1129.00 1563.00,1121.00" fill="none" stroke="#2e5b87" stroke-width="2.1" stroke-linejoin="miter" stroke-miterlimit="10"/>
</svg>
<div class="t" style="left:709.10px;top:1036.98px;font-size:24px;line-height:24px;font-weight:normal;color:#666;font-style:normal;">Energy consumption (kW)</div>
<div class="t" style="left:-1427.00px;width:1500px;text-align:right;top:1524.45px;font-size:22.5px;line-height:22.5px;font-weight:normal;color:#666;font-style:normal;">0</div>
<div class="t" style="left:-1427.00px;width:1500px;text-align:right;top:1433.71px;font-size:22.5px;line-height:22.5px;font-weight:normal;color:#666;font-style:normal;">6</div>
<div class="t" style="left:-1427.00px;width:1500px;text-align:right;top:1342.97px;font-size:22.5px;line-height:22.5px;font-weight:normal;color:#666;font-style:normal;">12</div>
<div class="t" style="left:-1427.00px;width:1500px;text-align:right;top:1252.23px;font-size:22.5px;line-height:22.5px;font-weight:normal;color:#666;font-style:normal;">18</div>
<div class="t" style="left:-1427.00px;width:1500px;text-align:right;top:1161.49px;font-size:22.5px;line-height:22.5px;font-weight:normal;color:#666;font-style:normal;">24</div>
<div class="t" style="left:-1427.00px;width:1500px;text-align:right;top:1070.75px;font-size:22.5px;line-height:22.5px;font-weight:normal;color:#666;font-style:normal;">30</div>
<div class="t" style="left:-654.00px;width:1500px;text-align:center;top:1561.69px;font-size:23.4px;line-height:23.4px;font-weight:normal;color:#666;font-style:normal;">0:00</div>
<div class="t" style="left:-470.62px;width:1500px;text-align:center;top:1561.69px;font-size:23.4px;line-height:23.4px;font-weight:normal;color:#666;font-style:normal;">3:00</div>
<div class="t" style="left:-287.25px;width:1500px;text-align:center;top:1561.69px;font-size:23.4px;line-height:23.4px;font-weight:normal;color:#666;font-style:normal;">6:00</div>
<div class="t" style="left:-103.88px;width:1500px;text-align:center;top:1561.69px;font-size:23.4px;line-height:23.4px;font-weight:normal;color:#666;font-style:normal;">9:00</div>
<div class="t" style="left:79.50px;width:1500px;text-align:center;top:1561.69px;font-size:23.4px;line-height:23.4px;font-weight:normal;color:#666;font-style:normal;">12:00</div>
<div class="t" style="left:262.88px;width:1500px;text-align:center;top:1561.69px;font-size:23.4px;line-height:23.4px;font-weight:normal;color:#666;font-style:normal;">15:00</div>
<div class="t" style="left:446.25px;width:1500px;text-align:center;top:1561.69px;font-size:23.4px;line-height:23.4px;font-weight:normal;color:#666;font-style:normal;">18:00</div>
<div class="t" style="left:629.62px;width:1500px;text-align:center;top:1561.69px;font-size:23.4px;line-height:23.4px;font-weight:normal;color:#666;font-style:normal;">21:00</div>
<div class="t" style="left:813.00px;width:1500px;text-align:center;top:1561.69px;font-size:23.4px;line-height:23.4px;font-weight:normal;color:#666;font-style:normal;">0:00</div>
<div class="t" style="left:65.00px;width:1500px;text-align:center;top:1595.69px;font-size:26px;line-height:26px;font-weight:normal;color:#777;font-style:italic;">Energy consumption: 626 kWh, Highest measured current: 75.52 A</div>
<div class="r" style="left:1450px;top:1092px;width:102px;height:42px;background:#24634a;border-radius:4px;box-shadow:0 0 8px 5px rgba(255,255,255,0.85);"></div>
<svg class="a" style="left:1450px;top:1092px" width="102" height="42" viewBox="0 0 102 42">
<g stroke="#fff" fill="none"><circle cx="20.1" cy="18" r="6.9" stroke-width="2.8"/>
<path d="M20.1 14.2 V21.8 M16.3 18 H23.9" stroke-width="2.3"/>
<path d="M25.3 23.2 L30.2 28.1" stroke-width="3.6" stroke-linecap="round"/></g></svg>
<div class="t" style="left:1485.80px;top:1102.19px;font-size:20.8px;line-height:20.8px;font-weight:normal;color:#ffffff;font-style:normal;">Zoom</div>
<svg class="a" style="left:1600px;top:380px" width="500" height="1050" viewBox="1600 380 500 1050"><path d="M1658.16 419.23 A10.8 10.8 0 1 0 1672.04 419.23" fill="none" stroke="#35393d" stroke-width="4.2" stroke-linecap="round"/><path d="M1665.1 414.10 V425.70" stroke="#35393d" stroke-width="3.9" stroke-linecap="round"/><path d="M1658.16 499.23 A10.8 10.8 0 1 0 1672.04 499.23" fill="none" stroke="#35393d" stroke-width="4.2" stroke-linecap="round"/><path d="M1665.1 494.10 V505.70" stroke="#35393d" stroke-width="3.9" stroke-linecap="round"/><path d="M1669.6 572 L1661.6 586.3 H1677.6 Z" fill="#35393d"/><path d="M1669.7 585 V598.5 H1652.2" fill="none" stroke="#35393d" stroke-width="2.5"/><path d="M1671 652.6 A14 14 0 1 0 1677.6 674.3 A14.2 14.2 0 0 1 1671 652.6 Z" fill="#35393d"/><g stroke="#fff" stroke-width="1.3" stroke-linecap="round"><path d="M1666.6 666 V660 M1666.6 666 L1658.3 673.7"/><path d="M1666.4 655 V657.2" /><path d="M1655.4 666 H1657.6"/><path d="M1666.4 675 V677.3"/><path d="M1658.7 658.5 L1660 659.8"/><path d="M1672.8 672.6 L1674 673.8"/></g><g fill="none" stroke="#a0a0a0" stroke-width="1.3" stroke-linejoin="miter"><path d="M1673.4 661 H1678.6 L1673.6 667.9 H1679"/><path d="M1675.6 652.7 H1679.6 L1675.6 657.2 H1679.9"/><path d="M1681.3 658.7 H1684.6 L1681.3 662.4 H1684.8"/></g><g fill="none" stroke="#35393d" stroke-width="1.9"><path d="M1655.8 1400.5 A17 17 0 1 1 1684.2 1400.5 Z" stroke-linejoin="round"/><circle cx="1670" cy="1394" r="3"/><path d="M1672.2 1391.6 L1678.4 1383.4" stroke-linecap="round"/></g><g fill="#35393d"><circle cx="1657.9" cy="1391.9" r="1.5"/><circle cx="1661.5" cy="1383.4" r="1.5"/><circle cx="1670" cy="1380" r="1.5"/><circle cx="1682" cy="1391.9" r="1.5"/></g><circle cx="2044" cy="1388" r="13.2" fill="#8d8a92"/><circle cx="2044" cy="1382.4" r="2.3" fill="#fff"/><path d="M2041 1386.3 H2045.8 V1392.8 H2047.2 V1395.2 H2040.8 V1392.8 H2042.2 V1388.6 H2041 Z" fill="#fff"/></svg>
<div class="t" style="left:1693.50px;top:412.71px;font-size:28.1px;line-height:28.1px;font-weight:normal;color:#35393d;font-style:normal;">Machine ON since:</div>
<div class="t" style="left:1018.50px;width:1500px;text-align:right;top:412.71px;font-size:28.1px;line-height:28.1px;font-weight:normal;color:#35393d;font-style:normal;">00:00:00</div>
<div class="t" style="left:1693.50px;top:492.71px;font-size:28.1px;line-height:28.1px;font-weight:normal;color:#35393d;font-style:normal;">Machine ON total:</div>
<div class="t" style="left:1018.50px;width:1500px;text-align:right;top:492.71px;font-size:28.1px;line-height:28.1px;font-weight:normal;color:#35393d;font-style:normal;">23:59:59</div>
<div class="t" style="left:1693.50px;top:572.21px;font-size:28.1px;line-height:28.1px;font-weight:normal;color:#35393d;font-style:normal;">First job commenced at:</div>
<div class="t" style="left:1018.50px;width:1500px;text-align:right;top:572.21px;font-size:28.1px;line-height:28.1px;font-weight:normal;color:#35393d;font-style:normal;">00:00:29</div>
<div class="t" style="left:1693.50px;top:652.71px;font-size:28.1px;line-height:28.1px;font-weight:bold;color:#35393d;font-style:normal;">Machine idle first job:</div>
<div class="t" style="left:1018.50px;width:1500px;text-align:right;top:652.71px;font-size:28.1px;line-height:28.1px;font-weight:bold;color:#35393d;font-style:normal;">00:00:29</div>
<div class="r" style="left:1652.00px;top:774.00px;width:876.00px;height:40.00px;background:#368664;"></div>
<div class="t" style="left:1660.20px;top:781.21px;font-size:28.1px;line-height:28.1px;font-weight:bold;color:#ffffff;font-style:normal;">Production time:</div>
<div class="t" style="left:1018.50px;width:1500px;text-align:right;top:781.21px;font-size:28.1px;line-height:28.1px;font-weight:bold;color:#ffffff;font-style:normal;">19:49:37</div>
<div class="r" style="left:1652.00px;top:856.00px;width:20.00px;height:20.00px;background:#368664;"></div>
<div class="t" style="left:1682.50px;top:852.01px;font-size:28.1px;line-height:28.1px;font-weight:bold;color:#35393d;font-style:normal;">Machine operation time:</div>
<div class="t" style="left:1018.50px;width:1500px;text-align:right;top:852.01px;font-size:28.1px;line-height:28.1px;font-weight:bold;color:#35393d;font-style:normal;">19:21:47</div>
<div class="r" style="left:1652.00px;top:936.00px;width:20.00px;height:20.00px;background:#fbc435;"></div>
<div class="t" style="left:1682.50px;top:931.81px;font-size:28.1px;line-height:28.1px;font-weight:normal;color:#35393d;font-style:normal;">Planned setup time:</div>
<div class="t" style="left:1018.50px;width:1500px;text-align:right;top:931.81px;font-size:28.1px;line-height:28.1px;font-weight:normal;color:#35393d;font-style:normal;">00:27:50</div>
<div class="r" style="left:1652.00px;top:1006.00px;width:876.00px;height:40.00px;background:#a3a3a3;"></div>
<div class="t" style="left:1660.20px;top:1012.71px;font-size:28.1px;line-height:28.1px;font-weight:bold;color:#ffffff;font-style:normal;">Non production time:</div>
<div class="t" style="left:1018.50px;width:1500px;text-align:right;top:1012.71px;font-size:28.1px;line-height:28.1px;font-weight:bold;color:#ffffff;font-style:normal;">04:10:23</div>
<div class="r" style="left:1652.00px;top:1088.00px;width:20.00px;height:20.00px;background:#f0892e;"></div>
<div class="t" style="left:1682.50px;top:1083.81px;font-size:28.1px;line-height:28.1px;font-weight:normal;color:#35393d;font-style:normal;">Exceeded setup time:</div>
<div class="t" style="left:1018.50px;width:1500px;text-align:right;top:1083.81px;font-size:28.1px;line-height:28.1px;font-weight:normal;color:#35393d;font-style:normal;">00:20:29</div>
<div class="r" style="left:1652.00px;top:1168.00px;width:20.00px;height:20.00px;background:#fe0010;"></div>
<div class="t" style="left:1682.50px;top:1163.91px;font-size:28.1px;line-height:28.1px;font-weight:normal;color:#35393d;font-style:normal;">Interrupted production:</div>
<div class="t" style="left:1018.50px;width:1500px;text-align:right;top:1163.91px;font-size:28.1px;line-height:28.1px;font-weight:normal;color:#35393d;font-style:normal;">00:15:00</div>
<div class="r" style="left:1652.00px;top:1248.00px;width:20.00px;height:20.00px;background:#dadada;"></div>
<div class="t" style="left:1682.50px;top:1243.91px;font-size:28.1px;line-height:28.1px;font-weight:normal;color:#35393d;font-style:normal;">Machine idle total:</div>
<div class="t" style="left:1018.50px;width:1500px;text-align:right;top:1243.91px;font-size:28.1px;line-height:28.1px;font-weight:normal;color:#35393d;font-style:normal;">03:34:54</div>
<div class="t" style="left:1703.50px;top:1375.01px;font-size:28.1px;line-height:28.1px;font-weight:bold;color:#35393d;font-style:normal;">ACHIEVED EFFICIENCY</div>
<div class="t" style="left:1018.50px;width:1500px;text-align:right;top:1375.01px;font-size:28.1px;line-height:28.1px;font-weight:bold;color:#35393d;font-style:normal;">82.61 %</div>
<div class="t" style="left:1650.30px;top:1501.91px;font-size:28.1px;line-height:28.1px;font-weight:normal;color:#35393d;font-style:normal;">Number of setups:</div>
<div class="t" style="left:1018.50px;width:1500px;text-align:right;top:1501.91px;font-size:28.1px;line-height:28.1px;font-weight:normal;color:#35393d;font-style:normal;">2</div>
<div class="t" style="left:2146.00px;width:1500px;text-align:center;top:415.55px;font-size:46px;line-height:46px;font-weight:bold;color:#33383c;font-style:normal;">Revenue</div>
<div class="r" style="left:2646.4px;top:490.3px;width:61.4px;height:73.6px;background:#3b6287;border-radius:8px;box-shadow:0 2px 3px rgba(0,0,0,0.25);"></div>
<div class="t" style="left:1925.50px;width:1500px;text-align:center;top:500.17px;font-size:52px;line-height:52px;font-weight:normal;color:#ffffff;font-style:normal;">&euro;</div>
<div class="r" style="left:2726px;top:490.3px;width:61.6px;height:73.6px;border-radius:8px;overflow:hidden;box-shadow:0 2px 3px rgba(0,0,0,0.3);background:linear-gradient(#324a62 0,#31475d 36.8px,#23374c 36.8px,#23384d 100%);"></div>
<div class="r" style="left:2796.4px;top:490.3px;width:61.6px;height:73.6px;border-radius:8px;overflow:hidden;box-shadow:0 2px 3px rgba(0,0,0,0.3);background:linear-gradient(#324a62 0,#31475d 36.8px,#23374c 36.8px,#23384d 100%);"></div>
<div class="r" style="left:2866.3px;top:490.3px;width:61.6px;height:73.6px;border-radius:8px;overflow:hidden;box-shadow:0 2px 3px rgba(0,0,0,0.3);background:linear-gradient(#324a62 0,#31475d 36.8px,#23374c 36.8px,#23384d 100%);"></div>
<svg class="a" style="left:2880px;top:500px" width="30" height="50" viewBox="2880 500 30 50"><path d="M2900.3 506.1 H2903.4 V544.4 H2897.4 V514.8 Q2893.5 518.2 2888.2 520.2 V514.9 Q2893.8 512 2898.3 507.4 Z" fill="#fff"/></svg>
<div class="r" style="left:2937.3px;top:490.3px;width:61.6px;height:73.6px;border-radius:8px;overflow:hidden;box-shadow:0 2px 3px rgba(0,0,0,0.3);background:linear-gradient(#324a62 0,#31475d 36.8px,#23374c 36.8px,#23384d 100%);"></div>
<div class="t" style="left:2218.10px;width:1500px;text-align:center;top:500.17px;font-size:52px;line-height:52px;font-weight:normal;color:#ffffff;font-style:normal;">8</div>
<div class="r" style="left:3007.5px;top:490.3px;width:61.6px;height:73.6px;border-radius:8px;overflow:hidden;box-shadow:0 2px 3px rgba(0,0,0,0.3);background:linear-gradient(#324a62 0,#31475d 36.8px,#23374c 36.8px,#23384d 100%);"></div>
<div class="t" style="left:2288.30px;width:1500px;text-align:center;top:500.17px;font-size:52px;line-height:52px;font-weight:normal;color:#ffffff;font-style:normal;">5</div>
<div class="r" style="left:3077.2px;top:490.3px;width:61.6px;height:73.6px;border-radius:8px;overflow:hidden;box-shadow:0 2px 3px rgba(0,0,0,0.3);background:linear-gradient(#324a62 0,#31475d 36.8px,#23374c 36.8px,#23384d 100%);"></div>
<div class="t" style="left:2358.00px;width:1500px;text-align:center;top:500.17px;font-size:52px;line-height:52px;font-weight:normal;color:#ffffff;font-style:normal;">6</div>
<svg class="a" style="left:2600px;top:650px" width="600" height="600" viewBox="2600 650 600 600"><path d="M2895.5 945.8 L2895.500 721.800 A224.0 224.0 0 1 1 2685.611 867.552 Z" fill="#368664"/><path d="M2895.5 945.8 L2685.611 867.552 A224.0 224.0 0 0 1 2696.637 842.701 Z" fill="#f9c132"/><path d="M2895.5 945.8 L2696.637 842.701 A224.0 224.0 0 0 1 2706.633 825.362 Z" fill="#f0892e"/><path d="M2895.5 945.8 L2706.633 825.362 A224.0 224.0 0 0 1 2714.914 813.268 Z" fill="#fe0000"/><path d="M2895.5 945.8 L2714.914 813.268 A224.0 224.0 0 0 1 2895.500 721.800 Z" fill="#dadada"/><path d="M2895.500 698.300 A247.5 247.5 0 1 1 2675.774 831.885 L2697.081 842.931 A223.5 223.5 0 1 0 2895.500 722.300 Z" fill="#134d33"/><path d="M2675.774 831.885 A247.5 247.5 0 0 1 2895.500 698.300 L2895.500 722.300 A223.5 223.5 0 0 0 2697.081 842.931 Z" fill="#a3a3a3"/></svg>
<div class="t" style="left:2079.00px;width:1500px;text-align:center;top:795.91px;font-size:32px;line-height:32px;font-weight:bold;color:#000000;font-style:normal;">15%</div>
<div class="t" style="left:2228.60px;width:1500px;text-align:center;top:1046.91px;font-size:32px;line-height:32px;font-weight:bold;color:#ffffff;font-style:normal;">81%</div>
</body></html>
